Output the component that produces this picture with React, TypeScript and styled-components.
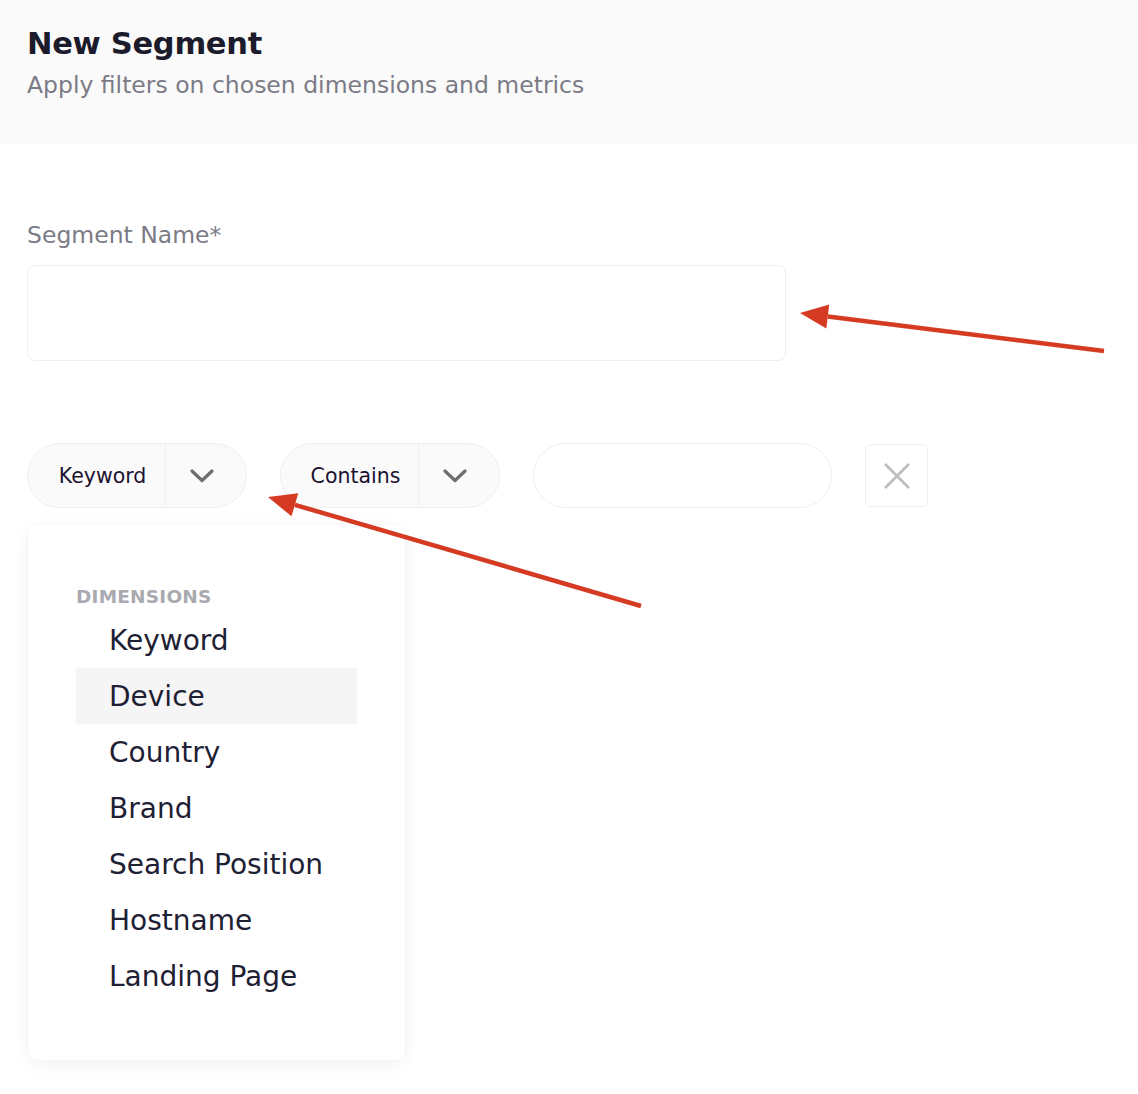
import React from 'react';
import styled, { createGlobalStyle } from 'styled-components';

const GlobalStyle = createGlobalStyle`
  html, body {
    margin: 0;
    padding: 0;
    background: #ffffff;
  }
  body {
    font-family: 'DejaVu Sans', 'Noto Sans', sans-serif;
  }
`;

const dimensions = ['Keyword', 'Device', 'Country', 'Brand', 'Search Position', 'Hostname', 'Landing Page'];

const Page = styled.div`
  position: relative;
  width: 1138px;
  height: 1094px;
  overflow: hidden;
`;

const Header = styled.div`
  height: 144px;
  background: #fafafa;
  padding: 26px 27px 0;
  box-sizing: border-box;
`;

const Title = styled.h1`
  margin: 0;
  font-size: 30.5px;
  line-height: 36px;
  font-weight: 700;
  color: #1b1b2b;
  letter-spacing: -0.3px;
`;

const Subtitle = styled.div`
  margin-top: 8px;
  font-size: 23.5px;
  line-height: 30px;
  color: #7b7b86;
`;

const Body = styled.div`
  padding: 76px 27px 0;
`;

const Label = styled.div`
  font-size: 23.5px;
  line-height: 30px;
  color: #7b7b86;
`;

const NameInput = styled.div`
  margin-top: 15px;
  width: 759px;
  height: 96px;
  box-sizing: border-box;
  border: 1.5px solid #efefef;
  border-radius: 8px;
`;

const FilterRow = styled.div`
  display: flex;
  align-items: center;
  gap: 33px;
  margin-top: 82px;
`;

const Select = styled.div`
  display: flex;
  align-items: stretch;
  width: 220px;
  height: 65px;
  box-sizing: border-box;
  border: 1.5px solid #efefef;
  border-radius: 33px;
  background: #fafafa;
`;

const SelectValue = styled.div`
  flex: 1;
  display: flex;
  align-items: center;
  justify-content: center;
  padding-left: 12px;
  font-size: 20.5px;
  color: #1c1230;
  border-right: 1.5px solid #efefef;
`;

const SelectToggle = styled.div`
  width: 80px;
  box-sizing: border-box;
  padding-right: 8px;
  display: flex;
  align-items: center;
  justify-content: center;
`;

const ValueInput = styled.div`
  width: 299px;
  height: 65px;
  box-sizing: border-box;
  border: 1.5px solid #efefef;
  border-radius: 33px;
`;

const RemoveButton = styled.div`
  width: 63px;
  height: 63px;
  box-sizing: border-box;
  border: 1.5px solid #efefef;
  border-radius: 6px;
  display: flex;
  align-items: center;
  justify-content: center;
`;

const Menu = styled.div`
  margin-top: 17px;
  margin-left: 1px;
  width: 377px;
  height: 535px;
  box-sizing: border-box;
  border-radius: 10px;
  background: #ffffff;
  box-shadow: 0 4px 18px rgba(0, 0, 0, 0.06), 0 0 2px rgba(0, 0, 0, 0.04);
  padding: 58px 48px 0;
`;

const GroupLabel = styled.div`
  font-size: 18.5px;
  line-height: 28px;
  font-weight: 700;
  color: #a9a9b0;
  letter-spacing: 0.2px;
  margin-bottom: 1px;
`;

const Option = styled.div<{ active?: boolean }>`
  height: 56px;
  display: flex;
  align-items: center;
  padding-left: 33px;
  font-size: 28px;
  color: #1e2033;
  background: ${({ active }) => (active ? '#f5f5f5' : 'transparent')};
`;

const Overlay = styled.svg`
  position: absolute;
  left: 0;
  top: 0;
  pointer-events: none;
`;

const Chevron = () => (
  <svg width="24" height="14" viewBox="0 0 24 14">
    <path d="M2 2 L12 11.5 L22 2" fill="none" stroke="#6e6e6e" strokeWidth="3.2" strokeLinecap="round" strokeLinejoin="round" />
  </svg>
);

const Cross = () => (
  <svg width="30" height="30" viewBox="0 0 30 30">
    <path d="M3 3 L27 27 M27 3 L3 27" stroke="#bdbdbd" strokeWidth="2.6" />
  </svg>
);

const Arrow = ({ x1, y1, x2, y2 }: { x1: number; y1: number; x2: number; y2: number }) => {
  const angle = Math.atan2(y2 - y1, x2 - x1);
  const len = 28;
  const half = 12;
  const bx = x2 - Math.cos(angle) * len;
  const by = y2 - Math.sin(angle) * len;
  const px = -Math.sin(angle) * half;
  const py = Math.cos(angle) * half;
  return (
    <g>
      <line x1={x1} y1={y1} x2={bx} y2={by} stroke="#d43b22" strokeWidth="4.5" />
      <polygon points={`${x2},${y2} ${bx + px},${by + py} ${bx - px},${by - py}`} fill="#d43b22" />
    </g>
  );
};

export default function App() {
  return (
    <Page>
      <GlobalStyle />
      <Header>
        <Title>New Segment</Title>
        <Subtitle>Apply filters on chosen dimensions and metrics</Subtitle>
      </Header>
      <Body>
        <Label>Segment Name*</Label>
        <NameInput />
        <FilterRow>
          <Select>
            <SelectValue>Keyword</SelectValue>
            <SelectToggle>
              <Chevron />
            </SelectToggle>
          </Select>
          <Select>
            <SelectValue>Contains</SelectValue>
            <SelectToggle>
              <Chevron />
            </SelectToggle>
          </Select>
          <ValueInput />
          <RemoveButton>
            <Cross />
          </RemoveButton>
        </FilterRow>
        <Menu>
          <GroupLabel>DIMENSIONS</GroupLabel>
          {dimensions.map((d) => (
            <Option key={d} active={d === 'Device'}>
              {d}
            </Option>
          ))}
        </Menu>
      </Body>
      <Overlay width="1138" height="1094">
        <Arrow x1={1104} y1={351} x2={800} y2={313} />
        <Arrow x1={641} y1={606} x2={268} y2={497} />
      </Overlay>
    </Page>
  );
}
